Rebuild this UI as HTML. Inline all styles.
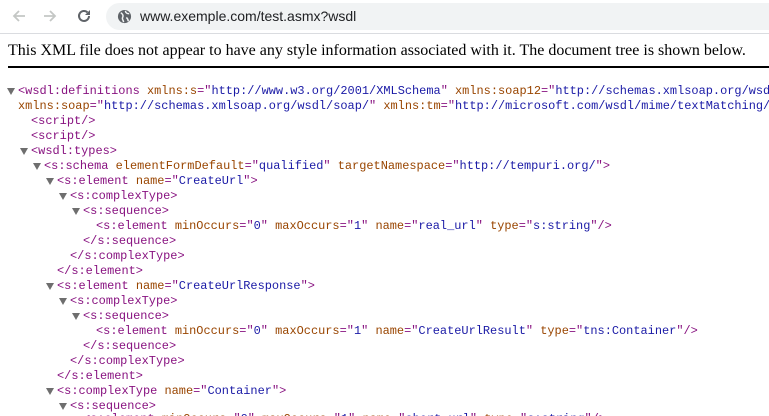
<!DOCTYPE html>
<html><head><meta charset="utf-8"><style>
*{margin:0;padding:0}
html,body{width:769px;height:416px;overflow:hidden}
body{background:#fff;position:relative;font-family:"Liberation Sans",sans-serif}
#w{position:absolute;left:0;top:0;width:769px;height:416px;overflow:hidden}
.bar{position:absolute;left:0;top:0;width:769px;height:33px;background:#fff;border-bottom:1px solid #dadce0;overflow:hidden}
.pill{position:absolute;left:106px;top:3px;width:700px;height:27px;border-radius:14px;background:#f1f3f4}
.url{position:absolute;left:140px;top:8px;font-size:14px;color:#202124}
.msg{position:absolute;left:8px;top:42px;font-family:"Liberation Serif",serif;font-size:16px;color:#000;white-space:nowrap}
.hr{position:absolute;left:8px;top:66px;width:761px;height:2px;background:#000}
.l{position:absolute;font-family:"Liberation Mono",monospace;font-size:11.95px;line-height:15px;white-space:pre;color:#881280}
.a{color:#994500}.v{color:#1a1aa6}
.t{position:absolute;width:0;height:0;border-left:4px solid transparent;border-right:4px solid transparent;border-top:7px solid #6e6e6e}
</style></head><body><div id="w">
<div class="bar">
<svg style="position:absolute;left:10px;top:7px" width="18" height="18" viewBox="0 0 18 18"><path d="M15 9H4M9 4L4 9l5 5" stroke="#c4c7c5" stroke-width="1.8" fill="none"/></svg>
<svg style="position:absolute;left:41px;top:7px" width="18" height="18" viewBox="0 0 18 18"><path d="M3 9h11M9 4l5 5-5 5" stroke="#c4c7c5" stroke-width="1.8" fill="none"/></svg>
<svg style="position:absolute;left:75px;top:7px" width="18" height="18" viewBox="0 0 18 18"><path d="M14 9a5 5 0 1 1-1.5-3.6" stroke="#5f6368" stroke-width="2" fill="none"/><path d="M15 3v5h-5z" fill="#5f6368"/></svg>
<div class="pill"></div>
<svg style="position:absolute;left:117px;top:9px" width="15" height="15" viewBox="0 0 16 16"><circle cx="8" cy="8" r="7" fill="#5f6368"/><path d="M4 4c2 1 3 3 2 5s1 3 1 5M9 2c0 2 2 3 4 3M10 9c1 1 2 2 2 4" stroke="#f1f3f4" stroke-width="1.6" fill="none"/></svg>
<div class="url">www.exemple.com/test.asmx?wsdl</div>
</div>
<div class="msg">This XML file does not appear to have any style information associated with it. The document tree is shown below.</div>
<div class="hr"></div>

<div class="t" style="left:7px;top:88px"></div>
<div class="l" style="left:18px;top:84px">&lt;wsdl:definitions <span class="a">xmlns:s</span>="<span class="v">http://www.w3.org/2001/XMLSchema</span>" <span class="a">xmlns:soap12</span>="<span class="v">http://schemas.xmlsoap.org/wsdl/soap12/</span>"</div>
<div class="l" style="left:18px;top:99px"><span class="a">xmlns:soap</span>="<span class="v">http://schemas.xmlsoap.org/wsdl/soap/</span>" <span class="a">xmlns:tm</span>="<span class="v">http://microsoft.com/wsdl/mime/textMatching/</span>"</div>
<div class="l" style="left:31px;top:114px">&lt;script/&gt;</div>
<div class="l" style="left:31px;top:129px">&lt;script/&gt;</div>
<div class="t" style="left:20px;top:148px"></div>
<div class="l" style="left:31px;top:144px">&lt;wsdl:types&gt;</div>
<div class="t" style="left:33px;top:163px"></div>
<div class="l" style="left:44px;top:159px">&lt;s:schema <span class="a">elementFormDefault</span>="<span class="v">qualified</span>" <span class="a">targetNamespace</span>="<span class="v">http://tempuri.org/</span>"&gt;</div>
<div class="t" style="left:46px;top:178px"></div>
<div class="l" style="left:57px;top:174px">&lt;s:element <span class="a">name</span>="<span class="v">CreateUrl</span>"&gt;</div>
<div class="t" style="left:59px;top:193px"></div>
<div class="l" style="left:70px;top:189px">&lt;s:complexType&gt;</div>
<div class="t" style="left:72px;top:208px"></div>
<div class="l" style="left:83px;top:204px">&lt;s:sequence&gt;</div>
<div class="l" style="left:96px;top:219px">&lt;s:element <span class="a">minOccurs</span>="<span class="v">0</span>" <span class="a">maxOccurs</span>="<span class="v">1</span>" <span class="a">name</span>="<span class="v">real_url</span>" <span class="a">type</span>="<span class="v">s:string</span>"/&gt;</div>
<div class="l" style="left:83px;top:234px">&lt;/s:sequence&gt;</div>
<div class="l" style="left:70px;top:249px">&lt;/s:complexType&gt;</div>
<div class="l" style="left:57px;top:264px">&lt;/s:element&gt;</div>
<div class="t" style="left:46px;top:283px"></div>
<div class="l" style="left:57px;top:279px">&lt;s:element <span class="a">name</span>="<span class="v">CreateUrlResponse</span>"&gt;</div>
<div class="t" style="left:59px;top:298px"></div>
<div class="l" style="left:70px;top:294px">&lt;s:complexType&gt;</div>
<div class="t" style="left:72px;top:313px"></div>
<div class="l" style="left:83px;top:309px">&lt;s:sequence&gt;</div>
<div class="l" style="left:96px;top:324px">&lt;s:element <span class="a">minOccurs</span>="<span class="v">0</span>" <span class="a">maxOccurs</span>="<span class="v">1</span>" <span class="a">name</span>="<span class="v">CreateUrlResult</span>" <span class="a">type</span>="<span class="v">tns:Container</span>"/&gt;</div>
<div class="l" style="left:83px;top:339px">&lt;/s:sequence&gt;</div>
<div class="l" style="left:70px;top:354px">&lt;/s:complexType&gt;</div>
<div class="l" style="left:57px;top:369px">&lt;/s:element&gt;</div>
<div class="t" style="left:46px;top:388px"></div>
<div class="l" style="left:57px;top:384px">&lt;s:complexType <span class="a">name</span>="<span class="v">Container</span>"&gt;</div>
<div class="t" style="left:59px;top:403px"></div>
<div class="l" style="left:70px;top:399px">&lt;s:sequence&gt;</div>
<div class="l" style="left:83px;top:412px">&lt;s:element <span class="a">minOccurs</span>="<span class="v">0</span>" <span class="a">maxOccurs</span>="<span class="v">1</span>" <span class="a">name</span>="<span class="v">short_url</span>" <span class="a">type</span>="<span class="v">s:string</span>"/&gt;</div>
</div></body></html>
